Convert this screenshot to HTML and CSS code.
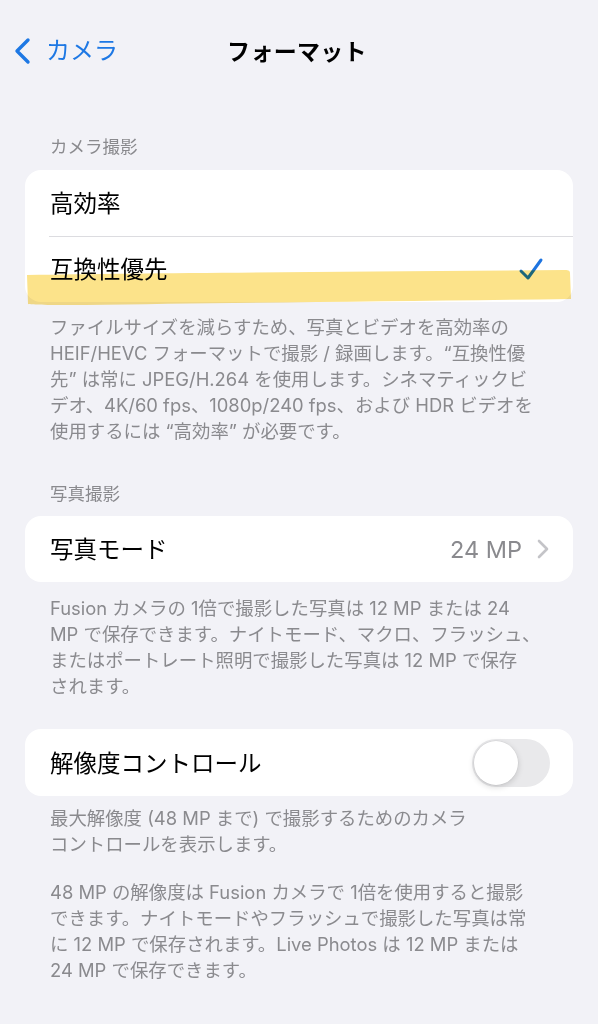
FILE: index.html
```html
<!DOCTYPE html>
<html lang="ja">
<head>
<meta charset="utf-8">
<title>フォーマット</title>
<link rel="stylesheet" href="styles.css">
</head>
<body>
<header class="nav">
  <div class="back">
    <svg class="back-icon" width="20" height="28" viewBox="0 0 20 28"><path d="M15 3 L4 14 L15 25" fill="none" stroke="currentColor" stroke-width="3.4" stroke-linecap="round" stroke-linejoin="round"/></svg>
    <span class="back-label">カメラ</span>
  </div>
  <h1 class="title">フォーマット</h1>
  <div></div>
</header>

<section class="group group-first">
  <h2 class="group-header">カメラ撮影</h2>
  <div class="card-wrap">
    <div class="card">
      <div class="row"><span class="row-label">高効率</span></div>
      <div class="row row-sep"><span class="row-label">互換性優先</span>
        <svg class="check" width="26" height="26" viewBox="0 0 26 26"><path d="M3 14 L10 21 L23 3" fill="none" stroke="currentColor" stroke-width="3" stroke-linecap="round" stroke-linejoin="round"/></svg>
      </div>
    </div>
    <svg class="highlight" width="548" height="42" viewBox="0 0 548 42"><path d="M2 7 C120 5 300 4 540 2 C544 2 545 3 545 5 L546 31 C380 33 200 35 60 37 C30 37 10 37 3 36 Z" fill="#fce38a"/></svg>
  </div>
  <p class="footer">ファイルサイズを減らすため、写真とビデオを高効率の<br>HEIF/HEVC フォーマットで撮影 / 録画します。“互換性優<br>先” は常に JPEG/H.264 を使用します。シネマティックビ<br>デオ、4K/60 fps、1080p/240 fps、および HDR ビデオを<br>使用するには “高効率” が必要です。</p>
</section>

<section class="group group-photo">
  <h2 class="group-header">写真撮影</h2>
  <div class="card">
    <div class="row"><span class="row-label">写真モード</span>
      <span class="row-value">24 MP</span>
      <svg class="chev" width="14" height="20" viewBox="0 0 14 20"><path d="M3 2 L11 10 L3 18" fill="none" stroke="currentColor" stroke-width="2.6" stroke-linecap="round" stroke-linejoin="round"/></svg>
    </div>
  </div>
  <p class="footer">Fusion カメラの 1倍で撮影した写真は 12 MP または 24<br>MP で保存できます。ナイトモード、マクロ、フラッシュ、<br>またはポートレート照明で撮影した写真は 12 MP で保存<br>されます。</p>
</section>

<section class="group group-res">
  <div class="card">
    <div class="row row-toggle"><span class="row-label">解像度コントロール</span>
      <span class="toggle"><span class="knob"></span></span>
    </div>
  </div>
  <p class="footer footer-tight">最大解像度 (48 MP まで) で撮影するためのカメラ<br>コントロールを表示します。</p>
  <p class="footer footer-second">48 MP の解像度は Fusion カメラで 1倍を使用すると撮影<br>できます。ナイトモードやフラッシュで撮影した写真は常<br>に 12 MP で保存されます。Live Photos は 12 MP または<br>24 MP で保存できます。</p>
</section>
</body>
</html>
```

FILE: styles.css
```css
* { box-sizing: border-box; }

html, body {
  margin: 0;
  padding: 0;
}

body {
  background: #f2f2f7;
  font-family: Inter, "Noto Sans CJK JP", sans-serif;
  color: #000;
  width: 598px;
  min-height: 1024px;
}

.nav {
  height: 100px;
  display: grid;
  grid-template-columns: 1fr auto 1fr;
  align-items: center;
  padding: 0 14px;
}

.back {
  display: flex;
  align-items: center;
  gap: 13px;
  color: #1e78e4;
  margin-top: 1px;
}

.back-icon { display: block; margin-left: -1px; }

.back-label {
  font-size: 24px;
  line-height: 28px;
}

.title {
  margin: 0;
  font-size: 23px;
  font-weight: 700;
  line-height: 28px;
  margin-top: 4px;
  margin-left: -4px;
  letter-spacing: 0.3px;
}

.group-header {
  margin: 36px 0 12px;
  padding: 0 50px;
  font-size: 17.5px;
  font-weight: 400;
  line-height: 22px;
  color: #8a8a8e;
}

.card-wrap { position: relative; }

.card {
  margin: 0 25px;
  background: #fff;
  border-radius: 16px;
  overflow: hidden;
}

.row {
  height: 66px;
  display: flex;
  align-items: center;
  padding: 2px 24px 0 25px;
  position: relative;
}

.row-sep::before {
  content: "";
  position: absolute;
  left: 24px;
  right: 0;
  top: 0;
  height: 1px;
  background: #dcdce0;
}

.row-label {
  font-size: 23.5px;
  line-height: 30px;
  flex: 1;
}

.check {
  color: #1e74e0;
  margin-right: 5px;
  margin-top: 0;
}

.highlight {
  position: absolute;
  left: 25px;
  top: 98px;
  mix-blend-mode: multiply;
  pointer-events: none;
}

.row-value {
  font-size: 23.5px;
  color: #8a8a8e;
  line-height: 30px;
  margin-right: 14px;
}

.chev { color: #c4c4c8; margin-right: -1px; margin-top: -2px; }

.footer {
  margin: 12px 0 0;
  padding: 0 30px 0 50px;
  font-size: 18.4px;
  line-height: 26px;
  color: #8a8a8e;
  white-space: nowrap;
}

.group-photo .group-header { margin-top: 39px; margin-bottom: 11px; }
.group-photo .footer { margin-top: 13px; }

.group-res { margin-top: 30px; }
.group-res .row-toggle { height: 67px; padding: 0 23px 0 25px; }
.group-res .row-label { margin-top: 2px; }

.toggle {
  width: 78px;
  height: 48px;
  border-radius: 24px;
  background: #e9e9eb;
  position: relative;
  display: block;
}

.knob {
  position: absolute;
  left: 2px;
  top: 2px;
  width: 44px;
  height: 44px;
  border-radius: 50%;
  background: #fff;
  box-shadow: 0 2px 6px rgba(0,0,0,0.16), 0 0 0 0.5px rgba(0,0,0,0.06);
}

.footer-tight { margin-top: 9px; }
.footer-second { margin-top: 22px; }
```
